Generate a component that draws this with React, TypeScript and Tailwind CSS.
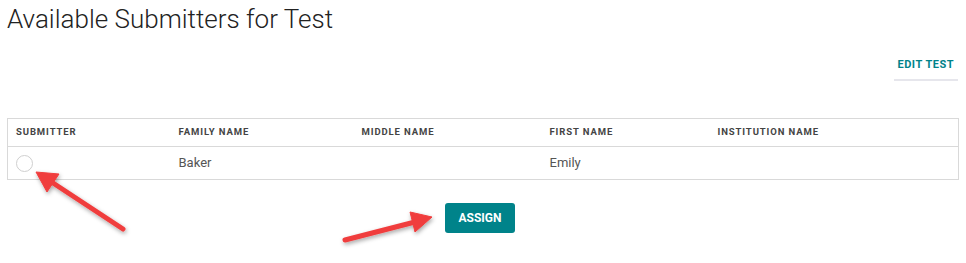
import React from "react";

const columns = [
  { label: "Submitter", width: "w-[163px]" },
  { label: "Family Name", width: "w-[183px]" },
  { label: "Middle Name", width: "w-[188px]" },
  { label: "First Name", width: "w-[168px]" },
  { label: "Institution Name", width: "" },
];

const rows = [{ id: 1, family: "Baker", middle: "", first: "Emily", institution: "" }];

const Arrows: React.FC = () => (
  <svg
    className="pointer-events-none absolute left-0 top-0"
    width="966"
    height="263"
    viewBox="0 0 966 263"
  >
    <defs>
      <filter id="shadow" x="-20%" y="-20%" width="140%" height="140%">
        <feDropShadow dx="1" dy="2" stdDeviation="2" floodColor="#000" floodOpacity="0.35" />
      </filter>
    </defs>
    <g filter="url(#shadow)" fill="#f03e3e" stroke="#f03e3e">
      <line x1="123" y1="229" x2="50" y2="181" strokeWidth="5" strokeLinecap="round" />
      <polygon points="36,172 59,174 47,192" strokeWidth="1" strokeLinejoin="round" />
      <line x1="345" y1="240" x2="415" y2="222" strokeWidth="5" strokeLinecap="round" />
      <polygon points="432,217 415,232 410,212" strokeWidth="1" strokeLinejoin="round" />
    </g>
  </svg>
);

export default function App() {
  return (
    <div
      className="relative h-[263px] w-[966px] overflow-hidden bg-white px-[7px]"
      style={{ fontFamily: "Roboto, 'Liberation Sans', sans-serif" }}
    >
      <h1 className="text-[26px] font-light leading-[38px] text-[#222]">
        Available Submitters for Test
      </h1>

      <div className="mt-[13px] flex justify-end">
        <button className="mr-px h-[30px] border-b-2 border-[#e6e6ec] px-[4px] text-[11px] font-bold uppercase tracking-[0.5px] text-[#00838a]">
          Edit Test
        </button>
      </div>

      <table className="mt-[37px] w-[952px] border-collapse border border-[#d9d9d9]">
        <thead>
          <tr className="h-[28px] border-b border-[#d9d9d9]">
            {columns.map((c) => (
              <th
                key={c.label}
                className={`${c.width} pl-[8px] text-left text-[9.5px] font-bold uppercase tracking-[0.9px] text-[#444]`}
              >
                {c.label}
              </th>
            ))}
          </tr>
        </thead>
        <tbody>
          {rows.map((r) => (
            <tr key={r.id} className="h-[33px] text-[13px] text-[#555]">
              <td className="pl-[8px]">
                <span className="block h-[17px] w-[17px] rounded-full border border-[#cfcfcf] bg-white" />
              </td>
              <td className="pl-[8px]">{r.family}</td>
              <td className="pl-[8px]">{r.middle}</td>
              <td className="pl-[8px]">{r.first}</td>
              <td className="pl-[8px]">{r.institution}</td>
            </tr>
          ))}
        </tbody>
      </table>

      <div className="mt-[23px] flex">
        <button className="ml-[438px] h-[30px] w-[70px] rounded-[3px] bg-[#00838a] text-[12px] font-bold uppercase text-white">
          Assign
        </button>
      </div>

      <Arrows />
    </div>
  );
}
